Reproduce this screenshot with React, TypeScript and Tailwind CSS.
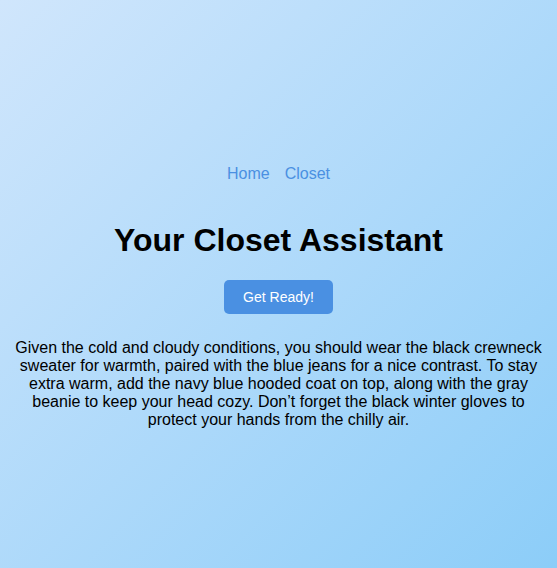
const links = ["Home", "Closet"];

const advice =
  "Given the cold and cloudy conditions, you should wear the black crewneck sweater for warmth, paired with the blue jeans for a nice contrast. To stay extra warm, add the navy blue hooded coat on top, along with the gray beanie to keep your head cozy. Don\u2019t forget the black winter gloves to protect your hands from the chilly air.";

export default function App() {
  return (
    <main className="flex min-h-screen flex-col items-center justify-center bg-gradient-to-br from-[#d0e6fc] to-[#8ccdf8] px-[12px] pt-[26px] text-center font-['Liberation_Sans',Arial,sans-serif] text-black">
      <nav className="flex gap-[15px] text-base leading-[18px] text-[#4a90e2]">
        {links.map((link) => (
          <a key={link} href="#" className="hover:underline">
            {link}
          </a>
        ))}
      </nav>

      <h1 className="mt-[39px] text-[32px] font-bold leading-[37px]">
        Your Closet Assistant
      </h1>

      <button className="mt-[21px] h-[34px] rounded-[5px] bg-[#4a90e2] px-[19px] text-sm leading-4 text-white">
        Get Ready!
      </button>

      <p className="mt-[25px] max-w-[533px] text-base leading-[18px]">
        {advice}
      </p>
    </main>
  );
}
